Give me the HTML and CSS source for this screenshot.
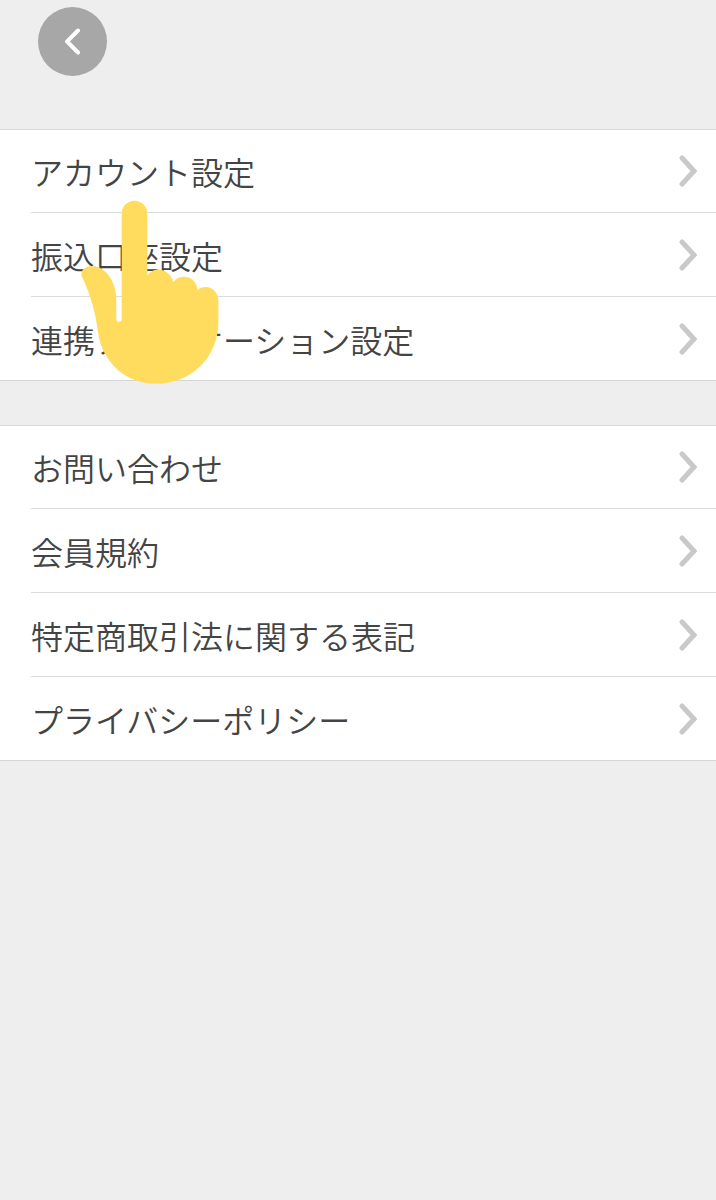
FILE: index.html
```
<!DOCTYPE html>
<html lang="ja">
<head>
    <meta charset="UTF-8">
    <meta name="viewport" content="width=device-width, initial-scale=1.0">
    <title>設定</title>
    <link rel="stylesheet" href="styles.css">
</head>
<body>
    <header class="header">
        <button class="back-btn" type="button" aria-label="戻る">
            <svg width="16" height="28" viewBox="0 0 16 28"><path d="M13 2.500L2 13.500L13 24.500"/></svg>
        </button>
    </header>

    <main>
        <ul class="menu">
            <li><a href="#account">アカウント設定<svg class="arrow" viewBox="0 0 18 32"><path d="M3 3L15 16L3 29"/></svg></a></li>
            <li><a href="#bank">振込口座設定<svg class="arrow" viewBox="0 0 18 32"><path d="M3 3L15 16L3 29"/></svg></a></li>
            <li><a href="#apps">連携アプリケーション設定<svg class="arrow" viewBox="0 0 18 32"><path d="M3 3L15 16L3 29"/></svg></a></li>
        </ul>

        <ul class="menu">
            <li><a href="#contact">お問い合わせ<svg class="arrow" viewBox="0 0 18 32"><path d="M3 3L15 16L3 29"/></svg></a></li>
            <li><a href="#terms">会員規約<svg class="arrow" viewBox="0 0 18 32"><path d="M3 3L15 16L3 29"/></svg></a></li>
            <li><a href="#law">特定商取引法に関する表記<svg class="arrow" viewBox="0 0 18 32"><path d="M3 3L15 16L3 29"/></svg></a></li>
            <li><a href="#privacy">プライバシーポリシー<svg class="arrow" viewBox="0 0 18 32"><path d="M3 3L15 16L3 29"/></svg></a></li>
        </ul>
    </main>

    <!-- 指カーソル -->
    <svg class="pointer" viewBox="80 200 140 184" aria-hidden="true">
        <path d="M121.700 213.500C121.700 206.300 127.400 200.700 134.500 200.700C141.600 200.700 147.300 206.300 147.300 213.500V275.700C150 271.500 153.600 269.500 158 269.500C165.500 269.500 171 274.500 173.400 282C176 278.500 179.500 276.700 184 276.700C191.500 276.700 196.500 282 197.700 290C199.500 288 202.200 286.900 205.500 286.900C213 286.900 218.400 293 218.400 301V322C218.400 357 191.500 383.800 156 383.800C126 383.800 102.500 362.500 98.200 333C95.500 311 89.500 292 82 277C79.500 271.500 84.500 266 92 266C105.500 266 116.300 281.500 116.300 300V319C116.300 323 121.700 323 121.700 319Z"/>
    </svg>
</body>
</html>
```
FILE: styles.css
```
* {
    margin: 0;
    padding: 0;
    box-sizing: border-box;
}

body {
    position: relative;
    min-height: 100vh;
    background: #eeeeee;
    color: #444444;
    font-family: 'Noto Sans CJK JP', sans-serif;
    font-size: 32px;
    font-weight: 350;
    line-height: 48px;
}

.header {
    padding: 7px 38px 53px;
}

.back-btn {
    display: flex;
    align-items: center;
    justify-content: center;
    width: 69px;
    height: 69px;
    border: none;
    border-radius: 50%;
    background: #a7a7a7;
    cursor: pointer;
}

.back-btn path {
    fill: none;
    stroke: #ffffff;
    stroke-width: 4;
    stroke-linecap: round;
}

.menu {
    margin-bottom: 44px;
    background: #ffffff;
    list-style: none;
}

.menu li {
    padding-left: 31px;
}

.menu a {
    display: flex;
    align-items: center;
    justify-content: space-between;
    min-height: 84px;
    padding-right: 19px;
    border-bottom: 1px solid #dcdcdc;
    color: inherit;
    text-decoration: none;
}

/* 先頭と末尾の線は画面幅いっぱいに引く */
.menu li:first-child {
    border-top: 1px solid #d6d6d6;
}

.menu li:first-child a {
    min-height: 83px;
}

.menu li:last-child {
    border-bottom: 1px solid #d6d6d6;
}

.menu li:last-child a {
    min-height: 83px;
    border-bottom: none;
}

.arrow {
    flex: none;
    width: 18px;
    height: 32px;
}

.arrow path {
    fill: none;
    stroke: #c9c9c9;
    stroke-width: 5;
    stroke-linecap: round;
}

.pointer {
    position: absolute;
    top: 200px;
    left: 80px;
    width: 140px;
    height: 184px;
    fill: #ffdb5e;
    pointer-events: none;
}
```
